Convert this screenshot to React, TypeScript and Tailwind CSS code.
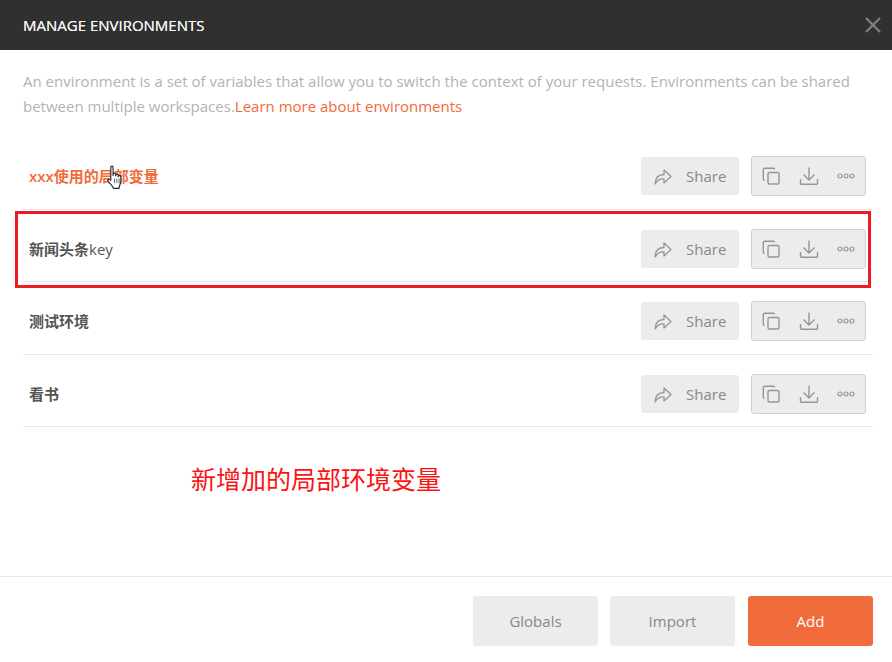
import React from 'react';

const envs = [
  { name: '使用的局部变量', prefix: 'xxx', suffix: '', active: true },
  { name: '新闻头条', prefix: '', suffix: 'key', active: false },
  { name: '测试环境', prefix: '', suffix: '', active: false },
  { name: '看书', prefix: '', suffix: '', active: false },
];

function ShareIcon() {
  return (
    <svg width="20" height="20" viewBox="0 0 20 20" fill="none" stroke="#969696" strokeWidth="1.3" strokeLinejoin="round">
      <path d="M2 18c.3-6 3.600-9.500 9-9.500V4l7 6.500-7 6.500v-4c-3.500-.4-6.500 1-9 5z" />
    </svg>
  );
}

function CopyIcon() {
  return (
    <svg width="20" height="20" viewBox="0 0 20 20" fill="none" stroke="#969696" strokeWidth="1.4">
      <path d="M3.500 14.500c-.8-.2-1.200-.8-1.200-1.500V4c0-1 .7-1.700 1.700-1.700h8c.8 0 1.300.3 1.600 1" />
      <rect x="7" y="6.500" width="11" height="11.500" rx="1.500" />
    </svg>
  );
}

function DownloadIcon() {
  return (
    <svg width="20" height="20" viewBox="0 0 20 20" fill="none" stroke="#969696" strokeWidth="1.4">
      <path d="M10 1.500v12M4.500 8.500l5.500 5.500 5.500-5.500" />
      <path d="M1.500 13v4.500c0 .4.300.7.700.7h15.600c.4 0 .7-.3.700-.7V13" />
    </svg>
  );
}

function DotsIcon() {
  return (
    <svg width="18" height="8" viewBox="0 0 18 8" fill="none" stroke="#969696" strokeWidth="1.200">
      <circle cx="3" cy="4" r="2" />
      <circle cx="9" cy="4" r="2" />
      <circle cx="15" cy="4" r="2" />
    </svg>
  );
}

function HandCursor() {
  return (
    <svg className="absolute left-[106px] top-[165px]" width="20" height="26" viewBox="0 0 18 25">
      <path
        d="M4 2c0-1.300 2.200-1.300 2.200 0v8l.3-1.500c.3-1 2-1 2.200.2v1.800l.3-1c.3-1 2-.9 2.200.3v1.400l.4-.6c.5-.8 1.900-.5 2 .6.300 2.500.2 5.500-.8 7.800-.6 1.500-.9 2.600-.9 3.500H6.500c-.6-1.800-2-3.500-3.800-5.300C1.500 16 .8 14.800 1.300 14c.6-.8 1.800-.4 2.700.8V2z"
        fill="#ffffff"
        stroke="#232b3a"
        strokeWidth="1.100"
        strokeLinejoin="round"
      />
      <path d="M7.500 13v4.500M9.800 13v4.500M12 13v4.500" stroke="#232b3a" strokeWidth="0.700" />
    </svg>
  );
}

export default function App() {
  return (
    <div
      className="relative flex h-[662px] w-[892px] flex-col bg-white"
      style={{ fontFamily: '"Open Sans", "Noto Sans CJK SC", sans-serif' }}
    >
      <header className="flex h-[50px] items-center justify-between bg-[#303030] pl-[23px] pr-[11px]">
        <h1 className="text-[15px] font-normal text-[#f4f4f4] [text-shadow:0_0_0.3px_#f4f4f4]">MANAGE ENVIRONMENTS</h1>
        <svg width="16" height="16" viewBox="0 0 16 16" stroke="#808080" strokeWidth="2.200">
          <path d="M1 1l14 14M15 1L1 15" />
        </svg>
      </header>

      <div className="flex-1 pl-[23px] pr-[19px] pt-[19px]">
        <p className="text-[15px] leading-[25px] text-[#b3b3b3]">
          An environment is a set of variables that allow you to switch the context of your requests. Environments can be shared
          between multiple workspaces.<span className="text-[#f26b3a]">Learn more about environments</span>
        </p>

        <div className="mt-[18px]">
          {envs.map((env) => (
            <div key={env.name} className="flex h-[72.500px] items-center justify-between border-b border-[#e8e8e8] pl-[6px] pr-[7px] pt-[7px]">
              <span className={`text-[15px] font-semibold ${env.active ? 'text-[#f26b3a]' : 'text-[#555555]'}`}>
                {env.prefix}{env.name}<span className="font-medium">{env.suffix}</span>
              </span>
              <div className="flex items-center gap-[12px]">
                <button className="flex h-[38px] w-[98px] items-center rounded-[3px] bg-[#ececec] pl-[12px] text-[15px] text-[#888888]">
                  <ShareIcon />
                  <span className="ml-[13px]">Share</span>
                </button>
                <div className="flex h-[40px] w-[115px] items-center rounded-[3px] border border-[#cfcfcf] bg-[#ececec] pl-[9px]">
                  <CopyIcon />
                  <span className="ml-[18px] flex"><DownloadIcon /></span>
                  <span className="ml-[18px] flex"><DotsIcon /></span>
                </div>
              </div>
            </div>
          ))}
        </div>
      </div>

      <footer className="flex h-[86px] items-start justify-end gap-[12px] border-t border-[#e8e8e8] pr-[19px] pt-[19px] text-[15px]">
        <button className="h-[50px] w-[125px] rounded-[3px] bg-[#ececec] text-[#888888]">Globals</button>
        <button className="h-[50px] w-[125px] rounded-[3px] bg-[#ececec] text-[#888888]">Import</button>
        <button className="ml-[1px] h-[50px] w-[125px] rounded-[3px] bg-[#f26b3a] font-medium text-white">Add</button>
      </footer>

      <HandCursor />
      <div className="pointer-events-none absolute left-[15px] top-[211px] h-[77px] w-[856px] border-[3px] border-[#ed1c24]" />
      <div className="absolute left-[191px] top-[461px] text-[25px] leading-[36px] text-[#fa1414]">新增加的局部环境变量</div>
    </div>
  );
}
